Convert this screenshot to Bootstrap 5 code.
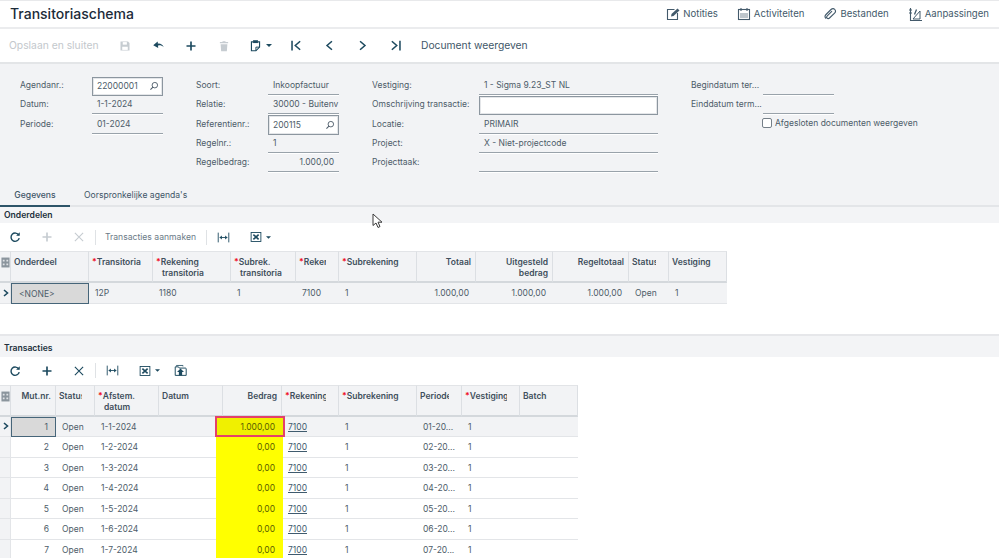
<!DOCTYPE html>
<html lang="nl">
<head>
<meta charset="utf-8">
<title>Transitoriaschema</title>
<link href="https://cdn.jsdelivr.net/npm/bootstrap@5.3.0/dist/css/bootstrap.min.css" rel="stylesheet">
<style>
html,body{height:558px;overflow:hidden}
body{font-family:Inter,"Liberation Sans",sans-serif;font-size:8.5px;color:#4d5c69;background:#fff;position:relative}
svg{display:block;flex:none}
.ic{color:#1d4a5f}.icd{color:#c6ccd1}.srch{color:#4d5c69}.flex-none{flex:none}
.titlebar{height:29px;border-top:1px solid #e8e9eb;border-bottom:2px solid #ebecee;padding:0 10px}
.titletext{font-size:14px;font-weight:500;color:#1c2b39;margin:0;line-height:1}
.toplink{font-size:9.6px;color:#435a6b;gap:3px}
.toplinks{gap:19px}
.maintools{height:35px;border-bottom:2px solid #e3e5e7;padding-left:9px}
.savetext{font-size:10.3px;color:#c3c8cc;width:99.5px}
.mbtn{width:33px;height:33px}
.mbtn.cap{width:39px;gap:4px}
.doctext{font-size:10.3px;color:#3f5769;margin-left:9.5px}
.formpane{height:122px;background:#f2f3f5;padding:12.5px 0 0 20px}
.fcol{display:grid;grid-auto-rows:19.4px;align-items:stretch}
.fc1{grid-template-columns:72px 71px;margin-right:33px}
.fc3{grid-template-columns:107px 179px;margin-right:33px}
.fc4{grid-template-columns:72px 71px}
.flab{font-size:8.5px;color:#4d5c69;align-self:center;padding-bottom:2px;white-space:nowrap;overflow:hidden}
.fval{border-bottom:1px solid #99a2aa;padding:0 5px;font-size:8.5px;display:flex;align-items:center;white-space:nowrap;overflow:hidden;margin-bottom:1px;box-shadow:0 1px 0 #fff}
.fbox{background:#fff;border:1px solid #8c969f;justify-content:space-between;padding:0 3px 0 4px;margin-bottom:0;box-shadow:0 0 0 1px #e4e6e9 inset}
.ftext{font-size:8.5px;color:#4d5c69;line-height:10px;padding-top:3px;align-items:flex-start}
.chk{width:10px;height:10px;border:1px solid #757f88;border-radius:2px;background:#fff;margin:0 3px 0 -1px}
.tabsbar{height:21px;border-bottom:2px solid #e3e5e8;background:#f2f3f5}
.tabon,.taboff{font-size:8.6px;height:21px;display:flex;align-items:center;justify-content:center;color:#3f5567;padding-bottom:1px}
.tabon{width:70px;border-bottom:2px solid #2d5468;font-weight:500}
.taboff{padding-left:14px;padding-bottom:2px}
.sechead{height:16px;background:#f3f4f6;font-size:8.6px;font-weight:600;color:#22303c;padding-left:4px;display:flex;align-items:center}
.sec2{height:21px;padding-top:5px}
.gridtools{height:28px}
.gbtn{width:32px;height:28px}
.gfirst{margin-left:-1px}
.gsep{width:1px;height:15px;background:#dfe2e5}
.gtext{font-size:8.6px;color:#6a7a87;padding:0 10px 0 9px}
.xbtn{width:38px;gap:4px;padding-left:5px}
.upbtn{width:28px}
.gridtable{border-collapse:separate;border-spacing:0;table-layout:fixed;margin:0;font-size:8.5px;color:#4d5c69;--bs-table-bg:transparent;border-color:transparent}
.gt1{width:727px}.gt2{width:578px}
.gridtable th{background:#f2f3f5;font-weight:600;font-size:8.5px;color:#3f4f5c;vertical-align:top;padding:5px 0 0 3px;line-height:11px;border:0;border-right:1px solid #dcdfe3;border-bottom:2px solid #d4d8dc;border-top:1px solid #e2e4e7;white-space:nowrap;overflow:hidden}
.gridtable th.selh{padding-left:1px}
.gridtable td{padding:1px 6px 0;border:0;border-bottom:1.5px solid #e3e5e8;vertical-align:middle;line-height:1;white-space:nowrap;overflow:hidden;box-shadow:none}
.gridtable td.selc{background:#f2f3f5;padding:0 0 0 2px;border-right:1px solid #e3e5e8}
.gridtable tr.cur td{background:#f2f3f5}
.gridtable td.act{background:#d9d9d9!important;border:1px solid #466579;padding-left:7px}
.gridtable td.ylw,.gridtable td.ylwon{overflow:visible;position:relative;color:#5a6100;border-bottom-color:#ff0}
.gridtable td.ylw{background:#ff0!important;box-shadow:-7px 0 0 #ff0,1px 0 0 #ff0}
.gridtable td.ylwon{background:#f0f000!important;box-shadow:-7px 0 0 #f0f000,1px 0 0 #f0f000;border-bottom-color:#f0f000}
.gridtable td.ylwon::after{content:"";position:absolute;left:-8px;right:-3px;top:-1px;bottom:-1px;border:2px solid #e4406a}
.gridtable .end{text-align:right}
.gridtable th.end{padding-right:4px;padding-left:0}
.gridtable td.end{padding-right:7px}
.h31{height:32px}
.r21{height:20.5px}
.req{color:#f01020;font-weight:700}
.ind{padding-left:6px;display:block}
.clip{overflow:hidden;margin-right:12px}
.lnk{color:#3f5b6e;text-decoration:underline}
.c9{width:11px}.c78{width:78px}.c64{width:64px}.c65{width:65px}.c43{width:43px}.c59{width:59px}.c77{width:77px}.c76{width:76px}.c40{width:40px}.c58{width:58px}.c45{width:45px}.c39{width:39px}.c57{width:57px}
.gap1{height:32px;border-bottom:2px solid #e6e7ea}
.ptr{position:absolute;left:372px;top:213px}
</style>
</head>
<body>
<svg width="0" height="0" class="position-absolute">
<symbol id="i-refresh" viewBox="0 0 16 16"><path d="M13 5.500A5.500 5.500 0 1 0 13.600 9.500" fill="none" stroke="currentColor" stroke-width="1.900"/><path d="M9.500 6.300h4.800V1.600z" fill="currentColor"/></symbol>
<symbol id="i-plus" viewBox="0 0 16 16"><path d="M8 2v12M2 8h12" stroke="currentColor" stroke-width="2.200" fill="none"/></symbol>
<symbol id="i-x" viewBox="0 0 16 16"><path d="M2.500 2.500l11 11M13.500 2.500l-11 11" stroke="currentColor" stroke-width="1.500" fill="none"/></symbol>
<symbol id="i-fit" viewBox="0 0 16 16"><path d="M1.500 2v12M14.500 2v12M3.500 8h9" stroke="currentColor" stroke-width="1.100" fill="none"/><path d="M3 8l3-2.500v5zM13 8l-3-2.500v5z" fill="currentColor"/></symbol>
<symbol id="i-xls" viewBox="0 0 16 16"><rect x="1.500" y="2" width="13" height="12" fill="#fff" stroke="currentColor" stroke-width="1.200"/><path d="M4.500 4.800l7 6.400M11.500 4.800l-7 6.400" stroke="currentColor" stroke-width="2.100" fill="none"/></symbol>
<symbol id="i-up" viewBox="0 0 16 16"><path d="M1.500 14V3.500h4l1 1.500h7.500a1 1 0 0 1 1 1V14z" fill="#fff" stroke="currentColor" stroke-width="1.200"/><path d="M3 3V1.800h8V3" fill="none" stroke="currentColor"/><path d="M8 5.500l4.300 4.300H10V14H6V9.800H3.700z" fill="currentColor"/></symbol>
<symbol id="i-save" viewBox="0 0 16 16"><path d="M2 2h10l2 2v10H2z" fill="currentColor"/><rect x="5" y="2.800" width="5.500" height="3.400" fill="#fff"/><rect x="4.300" y="9" width="7.400" height="4.200" fill="#fff"/></symbol>
<symbol id="i-undo" viewBox="0 0 16 16"><path d="M5 6.200c4-1.500 7.500-.5 9.500 3.800-2.800-2.400-5.600-2.800-8.700-1.500z" fill="currentColor"/><path d="M7 3L1.500 7.600 7.600 11z" fill="currentColor"/></symbol>
<symbol id="i-trash" viewBox="0 0 16 16"><path d="M6 1.500h4v1.300h3.500v1.600h-11V2.800H6zM3.500 5.500h9l-.7 9.500H4.200z" fill="currentColor"/></symbol>
<symbol id="i-clip" viewBox="0 0 16 16"><path d="M5 3.500H3v11h5.500L13 10V3.500h-2" fill="none" stroke="currentColor" stroke-width="1.400"/><rect x="5" y="1.500" width="6" height="3.500" fill="currentColor"/><path d="M8.500 14.500V10H13" fill="none" stroke="currentColor" stroke-width="1.200"/></symbol>
<symbol id="i-first" viewBox="0 0 16 16"><path d="M2.500 2v12" stroke="currentColor" stroke-width="1.900" fill="none"/><path d="M12.500 2.800L6.500 8l6 5.200" stroke="currentColor" stroke-width="1.900" fill="none"/></symbol>
<symbol id="i-prev" viewBox="0 0 16 16"><path d="M11 2.800L5 8l6 5.200" stroke="currentColor" stroke-width="1.900" fill="none"/></symbol>
<symbol id="i-next" viewBox="0 0 16 16"><path d="M5 2.800L11 8l-6 5.200" stroke="currentColor" stroke-width="1.900" fill="none"/></symbol>
<symbol id="i-last" viewBox="0 0 16 16"><path d="M13.500 2v12" stroke="currentColor" stroke-width="1.900" fill="none"/><path d="M3.500 2.800L9.500 8l-6 5.200" stroke="currentColor" stroke-width="1.900" fill="none"/></symbol>
<symbol id="i-arr" viewBox="0 0 8 8"><path d="M2 1l3.500 3L2 7" stroke="currentColor" stroke-width="1.600" fill="none"/></symbol>
<symbol id="i-search" viewBox="0 0 12 12"><circle cx="7" cy="5" r="3.300" fill="none" stroke="currentColor" stroke-width="1.100"/><path d="M4.700 7.400L1.700 10.400" stroke="currentColor" stroke-width="1.300"/></symbol>
<symbol id="i-sel" viewBox="0 0 10 12"><rect x="0.500" y="0.500" width="9" height="11" fill="#8b959d"/><path d="M2 3h2v2H2zM6 3h2v2H6zM2 7h2v2H2zM6 7h2v2H6z" fill="#dfe2e5"/></symbol>
<symbol id="i-note" viewBox="0 0 14 14"><path d="M8.500 2.500H1.500v10h10V6" fill="none" stroke="currentColor" stroke-width="1.100"/><path d="M5 9.500l.5-2.500 6-5.500 2 2L7.500 9z" fill="currentColor"/></symbol>
<symbol id="i-cal" viewBox="0 0 14 14"><rect x="1.500" y="2.500" width="11" height="10" fill="none" stroke="currentColor" stroke-width="1.100"/><path d="M4 1v3M10 1v3" stroke="currentColor" stroke-width="1.100"/><path d="M3 6h8v5H3z" fill="currentColor" opacity=".35"/></symbol>
<symbol id="i-paper" viewBox="0 0 14 14"><path d="M3 11.500c-1.500-1.500-1-3 0-4l5-5c1.300-1.200 2.800-1.200 3.800 0s.8 2.600-.2 3.600L6.500 11c-.8.800-1.800.8-2.400.2s-.6-1.600.2-2.400L9 4.200" fill="none" stroke="currentColor" stroke-width="1.100"/></symbol>
<symbol id="i-edit" viewBox="0 0 14 14"><path d="M2.500 1v12.500H14" fill="none" stroke="currentColor" stroke-width="1.100"/><path d="M1 3h3M1 6h3M5 12l7-8v8z" fill="none" stroke="currentColor"/><path d="M6 7l2-5 1 1-2 5z" fill="currentColor"/></symbol>
</svg>

<header class="titlebar d-flex align-items-center justify-content-between">
  <h1 class="titletext">Transitoriaschema</h1>
  <nav class="d-flex toplinks">
    <a class="toplink d-flex align-items-center text-decoration-none"><svg width="14" height="14"><use href="#i-note"/></svg>Notities</a>
    <a class="toplink d-flex align-items-center text-decoration-none"><svg width="14" height="14"><use href="#i-cal"/></svg>Activiteiten</a>
    <a class="toplink d-flex align-items-center text-decoration-none"><svg width="14" height="14"><use href="#i-paper"/></svg>Bestanden</a>
    <a class="toplink d-flex align-items-center text-decoration-none"><svg width="14" height="14"><use href="#i-edit"/></svg>Aanpassingen</a>
  </nav>
</header>

<div class="maintools d-flex align-items-center">
  <span class="savetext">Opslaan en sluiten</span>
  <span class="mbtn d-flex align-items-center justify-content-center icd"><svg width="12" height="12"><use href="#i-save"/></svg></span>
  <span class="mbtn d-flex align-items-center justify-content-center ic"><svg width="13" height="13"><use href="#i-undo"/></svg></span>
  <span class="mbtn d-flex align-items-center justify-content-center ic"><svg width="12" height="12"><use href="#i-plus"/></svg></span>
  <span class="mbtn d-flex align-items-center justify-content-center icd"><svg width="12" height="12"><use href="#i-trash"/></svg></span>
  <span class="mbtn cap d-flex align-items-center justify-content-center ic"><svg width="13" height="13"><use href="#i-clip"/></svg><svg width="6" height="3" viewBox="0 0 6 3"><path d="M0 0h6L3 3z" fill="currentColor"/></svg></span>
  <span class="mbtn d-flex align-items-center justify-content-center ic"><svg width="13" height="13"><use href="#i-first"/></svg></span>
  <span class="mbtn d-flex align-items-center justify-content-center ic"><svg width="13" height="13"><use href="#i-prev"/></svg></span>
  <span class="mbtn d-flex align-items-center justify-content-center ic"><svg width="13" height="13"><use href="#i-next"/></svg></span>
  <span class="mbtn d-flex align-items-center justify-content-center ic"><svg width="13" height="13"><use href="#i-last"/></svg></span>
  <span class="doctext">Document weergeven</span>
</div>

<section class="formpane d-flex">
  <div class="fcol fc1">
    <span class="flab">Agendanr.:</span><span class="fval fbox">22000001<svg class="srch" width="10" height="10"><use href="#i-search"/></svg></span>
    <span class="flab">Datum:</span><span class="fval">1-1-2024</span>
    <span class="flab">Periode:</span><span class="fval">01-2024</span>
  </div>
  <div class="fcol fc1">
    <span class="flab">Soort:</span><span class="fval">Inkoopfactuur</span>
    <span class="flab">Relatie:</span><span class="fval">30000 - Buitenv</span>
    <span class="flab">Referentienr.:</span><span class="fval fbox">200115<svg class="srch" width="10" height="10"><use href="#i-search"/></svg></span>
    <span class="flab">Regelnr.:</span><span class="fval">1</span>
    <span class="flab">Regelbedrag:</span><span class="fval justify-content-end">1.000,00</span>
  </div>
  <div class="fcol fc3">
    <span class="flab">Vestiging:</span><span class="fval">1 - Sigma 9.23_ST NL</span>
    <span class="flab">Omschrijving transactie:</span><span class="fval fbox"></span>
    <span class="flab">Locatie:</span><span class="fval">PRIMAIR</span>
    <span class="flab">Project:</span><span class="fval">X - Niet-projectcode</span>
    <span class="flab">Projecttaak:</span><span class="fval"></span>
  </div>
  <div class="fcol fc4">
    <span class="flab">Begindatum ter...</span><span class="fval"></span>
    <span class="flab">Einddatum term...</span><span class="fval"></span>
    <span></span><span class="ftext d-flex text-nowrap"><span class="chk d-block flex-none"></span>Afgesloten documenten weergeven</span>
  </div>
</section>

<div class="tabsbar d-flex">
  <span class="tabon">Gegevens</span>
  <span class="taboff">Oorspronkelijke agenda's</span>
</div>

<div class="sechead">Onderdelen</div>
<div class="gridtools d-flex align-items-center">
  <span class="gbtn gfirst d-flex align-items-center justify-content-center ic"><svg width="12" height="12"><use href="#i-refresh"/></svg></span>
  <span class="gbtn d-flex align-items-center justify-content-center icd"><svg width="12" height="12"><use href="#i-plus"/></svg></span>
  <span class="gbtn d-flex align-items-center justify-content-center icd"><svg width="12" height="12"><use href="#i-x"/></svg></span>
  <span class="gsep"></span>
  <span class="gtext">Transacties aanmaken</span>
  <span class="gsep"></span>
  <span class="gbtn d-flex align-items-center justify-content-center ic"><svg width="13" height="13"><use href="#i-fit"/></svg></span>
  <span class="gbtn xbtn d-flex align-items-center justify-content-center ic"><svg width="12" height="12"><use href="#i-xls"/></svg><svg width="5" height="3" viewBox="0 0 6 3"><path d="M0 0h6L3 3z" fill="currentColor"/></svg></span>
</div>

<table class="table gridtable gt1">
  <colgroup><col class="c9"><col class="c78"><col class="c64"><col class="c78"><col class="c65"><col class="c43"><col class="c78"><col class="c59"><col class="c77"><col class="c76"><col class="c40"><col class="c58"></colgroup>
  <thead><tr class="h31">
    <th class="selh"><svg width="9" height="11"><use href="#i-sel"/></svg></th>
    <th>Onderdeel</th>
    <th><span class="req">*</span>Transitoria</th>
    <th><span class="req">*</span>Rekening<span class="ind">transitoria</span></th>
    <th><span class="req">*</span>Subrek.<span class="ind">transitoria</span></th>
    <th><div class="clip"><span class="req">*</span>Rekening</div></th>
    <th><span class="req">*</span>Subrekening</th>
    <th class="end">Totaal</th>
    <th class="end">Uitgesteld<br>bedrag</th>
    <th class="end">Regeltotaal</th>
    <th><div class="clip">Status</div></th>
    <th>Vestiging</th>
  </tr></thead>
  <tbody><tr class="cur r21">
    <td class="selc"><svg class="ic" width="8" height="8"><use href="#i-arr"/></svg></td>
    <td class="act">&lt;NONE&gt;</td><td>12P</td><td>1180</td><td>1</td><td>7100</td><td>1</td>
    <td class="end">1.000,00</td><td class="end">1.000,00</td><td class="end">1.000,00</td><td>Open</td><td>1</td>
  </tr></tbody>
</table>
<div class="gap1"></div>

<div class="sechead sec2">Transacties</div>
<div class="gridtools d-flex align-items-center">
  <span class="gbtn gfirst d-flex align-items-center justify-content-center ic"><svg width="12" height="12"><use href="#i-refresh"/></svg></span>
  <span class="gbtn d-flex align-items-center justify-content-center ic"><svg width="12" height="12"><use href="#i-plus"/></svg></span>
  <span class="gbtn d-flex align-items-center justify-content-center ic"><svg width="12" height="12"><use href="#i-x"/></svg></span>
  <span class="gsep"></span>
  <span class="gbtn d-flex align-items-center justify-content-center ic"><svg width="13" height="13"><use href="#i-fit"/></svg></span>
  <span class="gbtn xbtn d-flex align-items-center justify-content-center ic"><svg width="12" height="12"><use href="#i-xls"/></svg><svg width="5" height="3" viewBox="0 0 6 3"><path d="M0 0h6L3 3z" fill="currentColor"/></svg></span>
  <span class="gbtn upbtn d-flex align-items-center justify-content-center ic"><svg width="13" height="13"><use href="#i-up"/></svg></span>
</div>

<table class="table gridtable gt2">
  <colgroup><col class="c9"><col class="c45"><col class="c39"><col class="c64"><col class="c64"><col class="c59"><col class="c57"><col class="c78"><col class="c45"><col class="c58"><col class="c58"></colgroup>
  <thead><tr class="h31">
    <th class="selh"><svg width="9" height="11"><use href="#i-sel"/></svg></th>
    <th class="end">Mut.nr.</th>
    <th><div class="clip">Status</div></th>
    <th><span class="req">*</span>Afstem.<span class="ind">datum</span></th>
    <th>Datum</th>
    <th class="end">Bedrag</th>
    <th><div class="clip"><span class="req">*</span>Rekening</div></th>
    <th><span class="req">*</span>Subrekening</th>
    <th><div class="clip">Periode</div></th>
    <th><div class="clip"><span class="req">*</span>Vestiging</div></th>
    <th>Batch</th>
  </tr></thead>
  <tbody>
    <tr class="cur r21"><td class="selc"><svg class="ic" width="8" height="8"><use href="#i-arr"/></svg></td><td class="act end">1</td><td>Open</td><td>1-1-2024</td><td></td><td class="end ylwon">1.000,00</td><td><a class="lnk">7100</a></td><td>1</td><td>01-20...</td><td>1</td><td></td></tr>
    <tr class="r21"><td class="selc"></td><td class="end">2</td><td>Open</td><td>1-2-2024</td><td></td><td class="end ylw">0,00</td><td><a class="lnk">7100</a></td><td>1</td><td>02-20...</td><td>1</td><td></td></tr>
    <tr class="r21"><td class="selc"></td><td class="end">3</td><td>Open</td><td>1-3-2024</td><td></td><td class="end ylw">0,00</td><td><a class="lnk">7100</a></td><td>1</td><td>03-20...</td><td>1</td><td></td></tr>
    <tr class="r21"><td class="selc"></td><td class="end">4</td><td>Open</td><td>1-4-2024</td><td></td><td class="end ylw">0,00</td><td><a class="lnk">7100</a></td><td>1</td><td>04-20...</td><td>1</td><td></td></tr>
    <tr class="r21"><td class="selc"></td><td class="end">5</td><td>Open</td><td>1-5-2024</td><td></td><td class="end ylw">0,00</td><td><a class="lnk">7100</a></td><td>1</td><td>05-20...</td><td>1</td><td></td></tr>
    <tr class="r21"><td class="selc"></td><td class="end">6</td><td>Open</td><td>1-6-2024</td><td></td><td class="end ylw">0,00</td><td><a class="lnk">7100</a></td><td>1</td><td>06-20...</td><td>1</td><td></td></tr>
    <tr class="r21"><td class="selc"></td><td class="end">7</td><td>Open</td><td>1-7-2024</td><td></td><td class="end ylw">0,00</td><td><a class="lnk">7100</a></td><td>1</td><td>07-20...</td><td>1</td><td></td></tr>
  </tbody>
</table>

<svg class="ptr" width="11" height="16" viewBox="0 0 11 16"><path d="M1 1v11.500l3-2.500 2 4.500 2-1-2-4.300h4z" fill="#fff" stroke="#3a3a3a" stroke-width="1"/></svg>
</body>
</html>
